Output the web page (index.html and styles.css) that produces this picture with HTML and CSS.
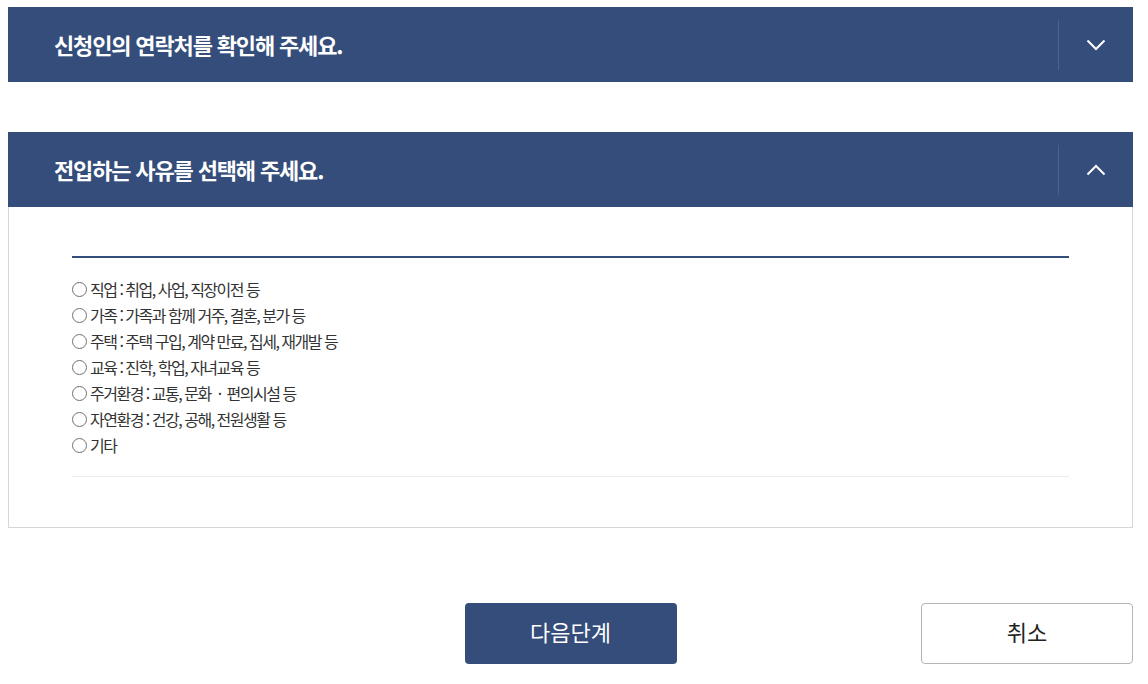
FILE: index.html
```html
<!DOCTYPE html>
<html lang="ko">
<head>
<meta charset="utf-8">
<link rel="stylesheet" href="styles.css">
</head>
<body>
<div class="page">
  <section class="acc">
    <div class="acc-head">
      <h2 class="acc-title">신청인의 연락처를 확인해 주세요.</h2>
      <button class="acc-toggle" aria-label="열기">
        <svg width="20" height="12" viewBox="0 0 20 12"><polyline points="1.5,1.5 10,10 18.5,1.5" fill="none" stroke="#fff" stroke-width="2"/></svg>
      </button>
    </div>
  </section>

  <section class="acc open">
    <div class="acc-head">
      <h2 class="acc-title">전입하는 사유를 선택해 주세요.</h2>
      <button class="acc-toggle" aria-label="닫기">
        <svg width="20" height="12" viewBox="0 0 20 12"><polyline points="1.5,10.5 10,2 18.5,10.5" fill="none" stroke="#fff" stroke-width="2"/></svg>
      </button>
    </div>
    <div class="acc-body">
      <ul class="opts">
        <li><span class="radio"></span>직업 : 취업, 사업, 직장이전 등</li>
        <li><span class="radio"></span>가족 : 가족과 함께 거주, 결혼, 분가 등</li>
        <li><span class="radio"></span>주택 : 주택 구입, 계약 만료, 집세, 재개발 등</li>
        <li><span class="radio"></span>교육 : 진학, 학업, 자녀교육 등</li>
        <li><span class="radio"></span>주거환경 : 교통, 문화<span class="mid">·</span>편의시설 등</li>
        <li><span class="radio"></span>자연환경 : 건강, 공해, 전원생활 등</li>
        <li><span class="radio"></span>기타</li>
      </ul>
    </div>
  </section>

  <div class="actions">
    <span></span>
    <button class="btn btn-primary">다음단계</button>
    <button class="btn btn-cancel">취소</button>
  </div>
</div>
</body>
</html>
```

FILE: styles.css
```css
* { box-sizing: border-box; }
html, body { margin: 0; padding: 0; background: #fff; }
body {
  font-family: "Noto Sans CJK KR", "Noto Sans", sans-serif;
  color: #222;
}
.page {
  width: 1148px;
  padding: 7px 15px 0 8px;
}
.acc { margin-bottom: 50px; }
.acc.open { margin-bottom: 75px; }
.acc-head {
  display: flex;
  align-items: center;
  height: 75px;
  background: #344d7a;
}
.acc-title {
  flex: 1;
  margin: 0;
  padding-left: 46px;
  font-size: 22px;
  font-weight: 700;
  letter-spacing: -1.15px;
  color: #fff;
  line-height: 1;
  position: relative;
  top: -1px;
}
.acc-toggle {
  width: 75px;
  height: 50px;
  display: flex;
  align-items: center;
  justify-content: center;
  background: none;
  border: 0;
  border-left: 1px solid rgba(255,255,255,0.12);
  padding: 0;
  margin: 0;
}
.acc-toggle svg { display: block; margin-left: -1px; }
.acc-body {
  border: 1px solid #d6d6d6;
  border-top: 0;
  padding: 49px 63px 50px 63px;
}
.opts {
  list-style: none;
  margin: 0;
  padding: 18px 0 18px;
  border-top: 2px solid #344d7a;
  border-bottom: 1px solid #ebebeb;
}
.opts li {
  display: flex;
  align-items: center;
  height: 26px;
  font-size: 16px;
  letter-spacing: -1.5px;
  color: #333;
  white-space: pre;
}
.mid { margin: 0 6px 0 7px; }
.radio {
  width: 15px;
  height: 15px;
  border: 1.5px solid #707070;
  border-radius: 50%;
  margin: 0 3px 0 0;
  flex: none;
}
.actions {
  display: grid;
  grid-template-columns: 1fr 212px 1fr;
  align-items: center;
}
.btn {
  width: 212px;
  height: 61px;
  border-radius: 4px;
  padding: 0 0 5px;
  font-family: "Noto Sans CJK KR", "Noto Sans", sans-serif;
  font-size: 22px;
  letter-spacing: 0;
  cursor: pointer;
}
.btn-primary {
  background: #344d7a;
  border: 0;
  color: #fff;
}
.btn-cancel {
  justify-self: end;
  background: #fff;
  border: 1px solid #b5b5b5;
  color: #222;
}
```
